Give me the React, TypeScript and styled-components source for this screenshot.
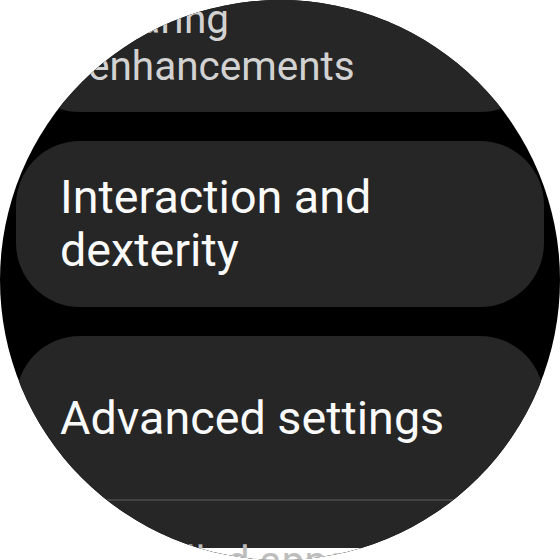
import styled, { createGlobalStyle } from 'styled-components';

const GlobalStyle = createGlobalStyle`
  html, body {
    margin: 0;
    padding: 0;
    background: #ffffff;
  }
  body {
    font-family: Roboto, "Noto Sans", "Liberation Sans", sans-serif;
  }
`;

const Screen = styled.div`
  width: 560px;
  height: 560px;
  background: #ffffff;
  overflow: hidden;
`;

const Face = styled.div`
  position: relative;
  width: 560px;
  height: 560px;
  border-radius: 50%;
  background: #000000;
  overflow: hidden;
  isolation: isolate;
`;

const List = styled.div`
  display: flex;
  flex-direction: column;
  gap: 29px;
  padding: 0 16px;
  margin-top: -34px;
`;

const Card = styled.div`
  background: #262626;
  border-radius: 64px;
`;

const Row = styled.div<{ $single?: boolean }>`
  padding: ${(p) => (p.$single ? '56px 44px 54px' : '30px 44px')};
`;

/* rows near the screen edge shrink, as the watch list does */
const EdgeRow = styled.div<{ $top?: boolean }>`
  position: relative;
  z-index: 2;
  padding: ${(p) => (p.$top ? '30px 60px 22px 72px' : '37px 44px 0 80px')};
`;

const Label = styled.div`
  font-size: 46.7px;
  line-height: 53px;
  color: #fafafa;
`;

const EdgeLabel = styled.div<{ $top?: boolean }>`
  font-size: 40.5px;
  line-height: 47px;
  color: ${(p) => (p.$top ? '#d2d2d2' : '#bdbdbd')};
  white-space: ${(p) => (p.$top ? 'normal' : 'nowrap')};
`;

const Divider = styled.div`
  height: 2px;
  background: #434343;
`;

const BottomFade = styled.div`
  position: absolute;
  left: 0;
  right: 0;
  bottom: 0;
  height: 12px;
  background: #ffffff;
  z-index: 1;
`;

const App = () => {
  return (
    <>
      <GlobalStyle />
      <Screen>
        <Face>
          <List>
            <Card>
              <EdgeRow $top>
                <EdgeLabel $top>Hearing enhancements</EdgeLabel>
              </EdgeRow>
            </Card>

            <Card>
              <Row>
                <Label>Interaction and dexterity</Label>
              </Row>
            </Card>

            <Card>
              <Row $single>
                <Label>Advanced settings</Label>
              </Row>
              <Divider />
              <EdgeRow>
                <EdgeLabel>Installed apps</EdgeLabel>
              </EdgeRow>
            </Card>
          </List>
          <BottomFade />
        </Face>
      </Screen>
    </>
  );
};

export default App;
